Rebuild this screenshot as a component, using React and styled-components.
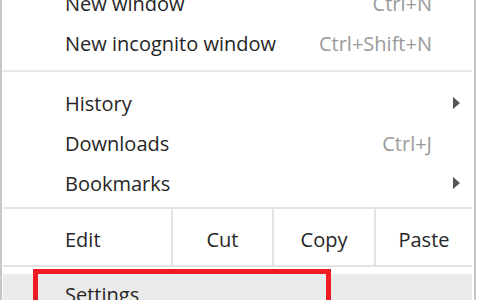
import styled, { createGlobalStyle } from "styled-components";

const GlobalStyle = createGlobalStyle`
  html, body {
    margin: 0;
    padding: 0;
    background: #ffffff;
    overflow: hidden;
  }
  body {
    width: 480px;
    height: 300px;
  }
`

const Menu = styled.div`
  width: 476px;
  box-sizing: border-box;
  margin-top: -17px;
  border-left: 2px solid #c6c6c6;
  border-right: 2px solid #c6c6c6;
  padding: 0 2px 0 1px;
  font-family: "Open Sans", "Noto Sans", sans-serif;
  font-size: 20px;
  color: #262626;
`

const Item = styled.div`
  position: relative;
  height: 40px;
  display: flex;
  align-items: center;
  padding: 0 12px 0 62px;
  background: ${p => (p.$active ? "#ebebeb" : "transparent")};
`

const Label = styled.span`
  flex: 1;
  white-space: nowrap;
`

const Shortcut = styled.span`
  color: #9a9a9a;
  margin-right: 28px;
  white-space: nowrap;
`

const Arrow = styled.span`
  width: 0;
  height: 0;
  border-top: 6px solid transparent;
  border-bottom: 6px solid transparent;
  border-left: 7px solid #555555;
`

const Separator = styled.div`
  height: 2px;
  background: #e8e8e8;
  margin: 7px 0 11px;
`

const EditRow = styled.div`
  display: grid;
  grid-template-columns: 168px 101px 102px 1fr;
  height: 60px;
  box-sizing: border-box;
  margin: 4px 0 7px;
  border-top: 2px solid #e3e3e3;
  border-bottom: 2px solid #e3e3e3;
`

const EditCell = styled.div`
  display: flex;
  align-items: center;
  justify-content: ${p => (p.$label ? "flex-start" : "center")};
  padding: 5px 0 0 ${p => (p.$label ? "62px" : "0")};
  border-left: ${p => (p.$label ? "none" : "2px solid #e3e3e3")};
`

const Highlight = styled.div`
  position: absolute;
  top: -5px;
  left: 30px;
  width: 298px;
  height: 60px;
  box-sizing: border-box;
  border: 5px solid #ed1c24;
`

const App = () => {
  return (
    <>
      <GlobalStyle />
      <Menu>
        <Item>
          <Label>New window</Label>
          <Shortcut>Ctrl+N</Shortcut>
        </Item>
        <Item>
          <Label>New incognito window</Label>
          <Shortcut>Ctrl+Shift+N</Shortcut>
        </Item>
        <Separator />
        <Item>
          <Label>History</Label>
          <Arrow />
        </Item>
        <Item>
          <Label>Downloads</Label>
          <Shortcut>Ctrl+J</Shortcut>
        </Item>
        <Item>
          <Label>Bookmarks</Label>
          <Arrow />
        </Item>
        <EditRow>
          <EditCell $label>Edit</EditCell>
          <EditCell>Cut</EditCell>
          <EditCell>Copy</EditCell>
          <EditCell>Paste</EditCell>
        </EditRow>
        <Item $active>
          <Label>Settings</Label>
          <Highlight />
        </Item>
      </Menu>
    </>
  )
}

export default App;
